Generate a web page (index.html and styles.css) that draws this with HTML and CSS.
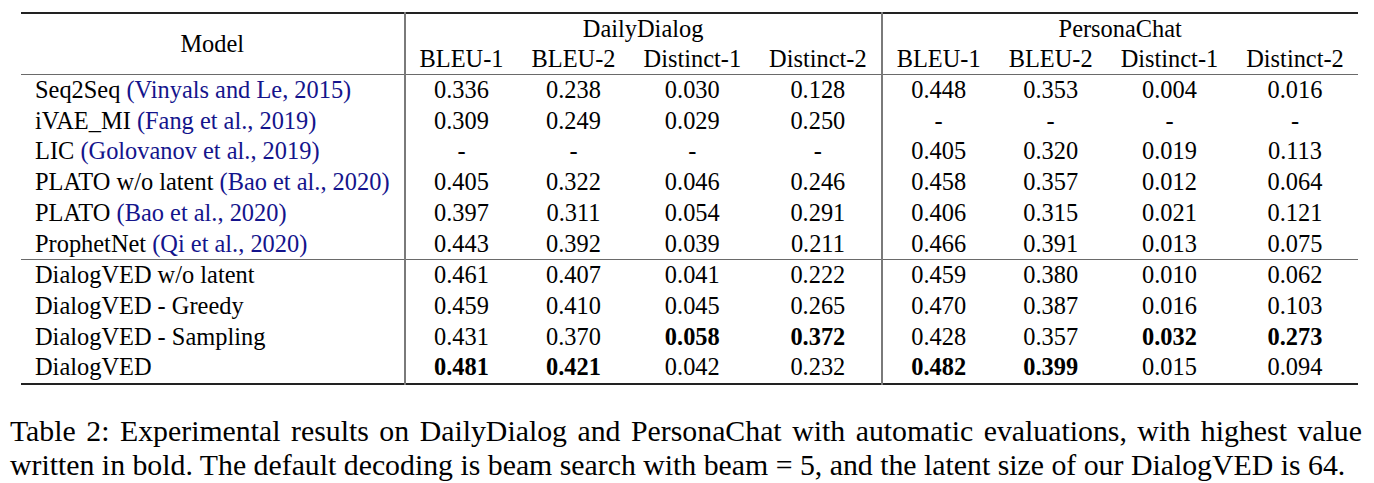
FILE: index.html
```html
<!DOCTYPE html>
<html lang="en">
<head>
<meta charset="utf-8">
<title>Table 2</title>
<link rel="stylesheet" href="styles.css">
</head>
<body>
<div class="page">
  <table class="results">
    <thead>
      <tr class="group-row">
        <th class="model-head" rowspan="2">Model</th>
        <th class="group sep" colspan="4">DailyDialog</th>
        <th class="group" colspan="4">PersonaChat</th>
      </tr>
      <tr class="metric-row">
        <th>BLEU-1</th><th>BLEU-2</th><th>Distinct-1</th><th class="sep">Distinct-2</th>
        <th>BLEU-1</th><th>BLEU-2</th><th>Distinct-1</th><th>Distinct-2</th>
      </tr>
    </thead>
    <tbody class="baselines">
      <tr>
        <td class="model">Seq2Seq <span class="cite">(Vinyals and Le, 2015)</span></td>
        <td>0.336</td><td>0.238</td><td>0.030</td><td class="sep">0.128</td>
        <td>0.448</td><td>0.353</td><td>0.004</td><td>0.016</td>
      </tr>
      <tr>
        <td class="model">iVAE_MI <span class="cite">(Fang et al., 2019)</span></td>
        <td>0.309</td><td>0.249</td><td>0.029</td><td class="sep">0.250</td>
        <td>-</td><td>-</td><td>-</td><td>-</td>
      </tr>
      <tr>
        <td class="model">LIC <span class="cite">(Golovanov et al., 2019)</span></td>
        <td>-</td><td>-</td><td>-</td><td class="sep">-</td>
        <td>0.405</td><td>0.320</td><td>0.019</td><td>0.113</td>
      </tr>
      <tr>
        <td class="model">PLATO w/o latent <span class="cite">(Bao et al., 2020)</span></td>
        <td>0.405</td><td>0.322</td><td>0.046</td><td class="sep">0.246</td>
        <td>0.458</td><td>0.357</td><td>0.012</td><td>0.064</td>
      </tr>
      <tr>
        <td class="model">PLATO <span class="cite">(Bao et al., 2020)</span></td>
        <td>0.397</td><td>0.311</td><td>0.054</td><td class="sep">0.291</td>
        <td>0.406</td><td>0.315</td><td>0.021</td><td>0.121</td>
      </tr>
      <tr>
        <td class="model">ProphetNet <span class="cite">(Qi et al., 2020)</span></td>
        <td>0.443</td><td>0.392</td><td>0.039</td><td class="sep">0.211</td>
        <td>0.466</td><td>0.391</td><td>0.013</td><td>0.075</td>
      </tr>
    </tbody>
    <tbody class="ours">
      <tr>
        <td class="model">DialogVED w/o latent</td>
        <td>0.461</td><td>0.407</td><td>0.041</td><td class="sep">0.222</td>
        <td>0.459</td><td>0.380</td><td>0.010</td><td>0.062</td>
      </tr>
      <tr>
        <td class="model">DialogVED - Greedy</td>
        <td>0.459</td><td>0.410</td><td>0.045</td><td class="sep">0.265</td>
        <td>0.470</td><td>0.387</td><td>0.016</td><td>0.103</td>
      </tr>
      <tr>
        <td class="model">DialogVED - Sampling</td>
        <td>0.431</td><td>0.370</td><td class="best">0.058</td><td class="sep best">0.372</td>
        <td>0.428</td><td>0.357</td><td class="best">0.032</td><td class="best">0.273</td>
      </tr>
      <tr>
        <td class="model">DialogVED</td>
        <td class="best">0.481</td><td class="best">0.421</td><td>0.042</td><td class="sep">0.232</td>
        <td class="best">0.482</td><td class="best">0.399</td><td>0.015</td><td>0.094</td>
      </tr>
    </tbody>
  </table>
  <p class="caption">Table 2: Experimental results on DailyDialog and PersonaChat with automatic evaluations, with highest value written in bold. The default decoding is beam search with beam = 5, and the latent size of our DialogVED is 64.</p>
</div>
</body>
</html>
```
FILE: styles.css
```css
html, body {
  margin: 0;
  padding: 0;
  background: #ffffff;
}

.page {
  width: 1374px;
  padding-top: 12px;
  font-family: "Liberation Serif", "Times New Roman", serif;
  color: #000000;
}

.results {
  margin-left: 21px;
  border-collapse: collapse;
  font-size: 24.4px;
  line-height: 30px;
  border-top: 2px solid #222222;
  border-bottom: 2px solid #222222;
}

.results th,
.results td {
  padding: 0 14px;
  font-weight: normal;
  text-align: center;
  white-space: nowrap;
  vertical-align: middle;
}

.results .model-head {
  border-right: 2px solid #7a7a7a;
}

.results .model {
  text-align: left;
  border-right: 2px solid #7a7a7a;
}

.results .sep {
  border-right: 2px solid #7a7a7a;
}

.results .cite {
  color: #14148c;
}

.results .best {
  font-weight: bold;
}

.results .metric-row th {
  line-height: 30px;
}

.baselines tr:first-child td {
  border-top: 1px solid #6a6a6a;
}

.ours tr:first-child td {
  border-top: 1px solid #6a6a6a;
}

.results tbody td {
  line-height: 30.7px;
}

.caption {
  margin: 29px 0 0 10px;
  width: 1352px;
  font-size: 29.8px;
  line-height: 34px;
  text-align: justify;
}
```
